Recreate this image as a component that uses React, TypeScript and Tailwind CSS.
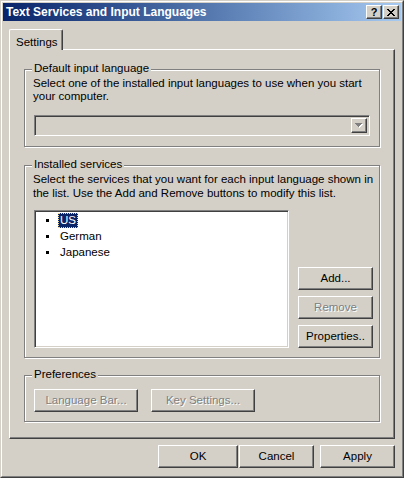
import React from "react";

const raised =
  "border border-t-white border-l-white border-r-[#404040] border-b-[#404040] shadow-[inset_-1px_-1px_0_#808080]";
const sunken =
  "border border-t-[#808080] border-l-[#808080] border-r-white border-b-white shadow-[inset_1px_1px_0_#404040,inset_-1px_-1px_0_#d4d0c8]";

function Btn({
  children,
  w,
  disabled = false,
}: {
  children: React.ReactNode;
  w: string;
  disabled?: boolean;
}) {
  return (
    <div
      className={`${raised} ${w} h-[23px] flex items-center justify-center bg-[#d4d0c8] ${
        disabled ? "text-[#808080] [text-shadow:1px_1px_0_#fff]" : "text-black"
      }`}
    >
      {children}
    </div>
  );
}

function Group({
  title,
  h,
  className = "",
  children,
}: {
  title: string;
  h: string;
  className?: string;
  children: React.ReactNode;
}) {
  return (
    <div
      className={`relative w-[356px] ${h} border border-[#808080] shadow-[inset_1px_1px_0_#fff,1px_1px_0_#fff] ${className}`}
    >
      {/* legend sits over the etched line */}
      <span className="absolute -top-[8px] left-[7px] px-[2px] bg-[#d4d0c8] leading-[13px]">{title}</span>
      {children}
    </div>
  );
}

export default function App() {
  const languages = ["US", "German", "Japanese"];

  return (
    <div className="w-[404px] h-[478px] bg-[#d4d0c8] text-[11.5px] text-black font-['Liberation_Sans',Arial,sans-serif] border border-t-[#d4d0c8] border-l-[#d4d0c8] border-r-[#404040] border-b-[#404040]">
      <div className="h-full border border-t-white border-l-white border-r-[#808080] border-b-[#808080] p-[1px]">
        {/* Title bar */}
        <div className="h-[18px] flex items-center justify-between bg-gradient-to-r from-[#0a246a] to-[#a6caf0] pl-[3px] pr-[2px]">
          <span className="text-white font-bold text-[12px] leading-none">Text Services and Input Languages</span>
          <div className="flex">
            <div className={`${raised} w-[16px] h-[14px] bg-[#d4d0c8] flex items-center justify-center font-bold text-[11px] leading-none`}>
              ?
            </div>
            <div className={`${raised} ml-[1px] w-[16px] h-[14px] bg-[#d4d0c8] flex items-center justify-center`}>
              <svg width="8" height="7" viewBox="0 0 8 7" shapeRendering="crispEdges">
                <path d="M0 0h2v1H0zM6 0h2v1H6zM1 1h2v1H1zM5 1h2v1H5zM2 2h4v1H2zM3 3h2v1H3zM2 4h4v1H2zM1 5h2v1H1zM5 5h2v1H5zM0 6h2v1H0zM6 6h2v1H6z" fill="#000" />
              </svg>
            </div>
          </div>
        </div>

        {/* Tabs */}
        <div className="ml-[6px] mt-[8px]">
          <div className="relative z-10 w-[54px] h-[21px] bg-[#d4d0c8] border-t border-l border-r border-t-white border-l-white border-r-[#404040] shadow-[inset_-1px_0_0_#808080] rounded-tl-[2px] rounded-tr-[2px] flex items-start pt-[4px] pl-[6px]">
            Settings
          </div>
          <div className="-mt-[1px] w-[386px] h-[390px] border border-t-white border-l-white border-r-[#404040] border-b-[#404040] shadow-[inset_-1px_-1px_0_#808080] pl-[14px] pt-[19px]">
            <Group title="Default input language" h="h-[78px]">
              <div className="pl-[8px] pt-[7px] leading-[13px]">
                <div>Select one of the installed input languages to use when you start</div>
                <div>your computer.</div>
              </div>
              <div className={`${sunken} ml-[9px] mt-[12px] w-[336px] h-[21px] p-[2px] flex justify-end`}>
                <div className={`${raised} w-[16px] h-[15px] flex items-center justify-center`}>
                  <svg width="8" height="5" viewBox="0 0 8 5" shapeRendering="crispEdges">
                    <path d="M1 1h7v1H1zM2 2h5v1H2zM3 3h3v1H3zM4 4h1v1H4z" fill="#fff" />
                    <path d="M0 0h7v1H0zM1 1h5v1H1zM2 2h3v1H2zM3 3h1v1H3z" fill="#808080" />
                  </svg>
                </div>
              </div>
            </Group>

            <Group title="Installed services" h="h-[193px]" className="mt-[18px]">
              <div className="pl-[8px] pt-[6px] leading-[14px]">
                <div>Select the services that you want for each input language shown in</div>
                <div>the list. Use the Add and Remove buttons to modify this list.</div>
              </div>
              <div className="flex ml-[9px] mt-[10px]">
                <div className={`${sunken} bg-white w-[255px] h-[138px] pt-[1px]`}>
                  {languages.map((lang, i) => (
                    <div key={lang} className="h-[16px] flex items-center">
                      <span className="ml-[11px] w-[3px] h-[3px] bg-black" />
                      <span
                        className={`ml-[9px] px-[1px] leading-[13px] border border-dotted ${
                          i === 0 ? "bg-[#0a246a] text-white border-[#f5db95]" : "border-transparent"
                        }`}
                      >
                        {lang}
                      </span>
                    </div>
                  ))}
                </div>
                <div className="ml-[9px] mt-[57px] flex flex-col gap-[6px]">
                  <Btn w="w-[75px]">Add...</Btn>
                  <Btn w="w-[75px]" disabled>
                    Remove
                  </Btn>
                  <Btn w="w-[75px]">Properties..</Btn>
                </div>
              </div>
            </Group>

            <Group title="Preferences" h="h-[47px]" className="mt-[17px]">
              <div className="flex gap-[13px] ml-[9px] mt-[13px]">
                <Btn w="w-[104px]" disabled>
                  Language Bar...
                </Btn>
                <Btn w="w-[104px]" disabled>
                  Key Settings...
                </Btn>
              </div>
            </Group>
          </div>
        </div>

        {/* Dialog buttons */}
        <div className="flex justify-end pr-[6px] mt-[6px]">
          <Btn w="w-[80px]">OK</Btn>
          <div className="ml-[1px]">
            <Btn w="w-[75px]">Cancel</Btn>
          </div>
          <div className="ml-[6px]">
            <Btn w="w-[75px]">Apply</Btn>
          </div>
        </div>
      </div>
    </div>
  );
}
